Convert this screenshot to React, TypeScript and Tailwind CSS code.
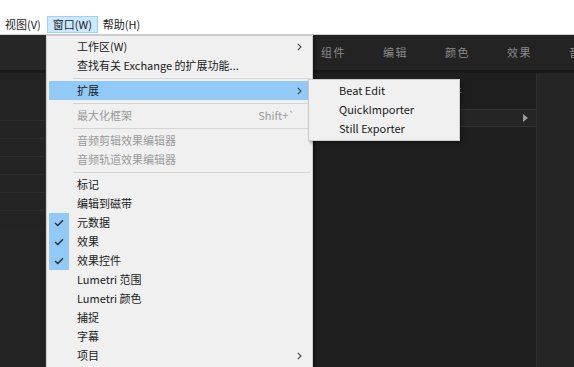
import React from "react";

const Check = () => (
  <svg width="10" height="8" viewBox="0 0 10 8" className="block">
    <polyline points="1,4 3.8,6.6 9,1.2" fill="none" stroke="#2b2b2b" strokeWidth="1.4" />
  </svg>
);

const Chevron = () => (
  <svg width="5" height="8" viewBox="0 0 5 8" className="block">
    <polyline points="0.8,0.8 4,4 0.8,7.2" fill="none" stroke="#444" strokeWidth="1.1" />
  </svg>
);

type Item =
  | { sep: true }
  | {
      sep?: false;
      label: string;
      sub?: boolean;
      disabled?: boolean;
      checked?: boolean;
      shortcut?: string;
      active?: boolean;
    };

const items: Item[] = [
  { label: "工作区(W)", sub: true },
  { label: "查找有关 Exchange 的扩展功能..." },
  { sep: true },
  { label: "扩展", sub: true, active: true },
  { sep: true },
  { label: "最大化框架", disabled: true, shortcut: "Shift+`" },
  { sep: true },
  { label: "音频剪辑效果编辑器", disabled: true },
  { label: "音频轨道效果编辑器", disabled: true },
  { sep: true },
  { label: "标记" },
  { label: "编辑到磁带" },
  { label: "元数据", checked: true },
  { label: "效果", checked: true },
  { label: "效果控件", checked: true },
  { label: "Lumetri 范围" },
  { label: "Lumetri 颜色" },
  { label: "捕捉" },
  { label: "字幕" },
  { label: "项目", sub: true },
];

export default function App() {
  return (
    <div className="relative w-[574px] h-[367px] overflow-hidden bg-white text-[11px] leading-none font-['Noto_Sans_CJK_SC','Noto_Sans',sans-serif]">
      {/* menu bar */}
      <div className="h-[35px] flex items-end pb-[1px] bg-white border-b border-[#cfcfcf] text-[#1a1a1a]">
        <div className="h-[17px] flex items-center pl-[5px] pr-[6px]">视图(V)</div>
        <div className="h-[17px] flex items-center px-[5px] bg-[#cce8ff] border border-[#99d1ff]">窗口(W)</div>
        <div className="h-[17px] flex items-center px-[5px]">帮助(H)</div>
      </div>

      {/* dark workspace */}
      <div className="flex h-[332px]">
        <div className="w-[46px] shrink-0 flex flex-col bg-[#232323] border-r border-[#363636]">
          <div className="h-[35px] bg-[#262626]" />
          <div className="h-[3px] bg-[#191919]" />
          <div className="h-[47px]" />
          <div className="h-[18px] border-t border-[#2c2c2c]" />
          <div className="h-[18px] border-t border-[#2c2c2c]" />
          <div className="h-[18px] border-t border-[#2c2c2c]" />
          <div className="h-[18px] border-t border-[#2c2c2c]" />
          <div className="h-[18px] border-t border-[#2c2c2c]" />
          <div className="h-[18px] border-t border-[#2c2c2c]" />
          <div className="flex-1 bg-[#242424]" />
        </div>
        <div className="flex-1 min-w-0 flex flex-col bg-[#1e1e1e]">
          <div className="h-[35px] bg-[#232323] flex items-center pl-[275px] overflow-hidden text-[#8a8a8a] tracking-[1.5px] whitespace-nowrap">
            <div className="w-[62px] shrink-0">组件</div>
            <div className="w-[62px] shrink-0">编辑</div>
            <div className="w-[62px] shrink-0">颜色</div>
            <div className="w-[62px] shrink-0">效果</div>
            <div className="w-[62px] shrink-0">音频</div>
          </div>
          <div className="h-[3px] bg-[#191919]" />
          <div className="flex-1 flex">
            <div className="flex-1 flex flex-col">
              <div className="h-[36px] flex items-center justify-end pr-[74px] text-[#8a8a8a]">效果控件</div>
              <div className="h-[18px] ml-[254px] flex items-center justify-end pr-[8px] bg-[#252525] border-y border-[#333]">
                <svg width="5" height="8" viewBox="0 0 5 8">
                  <polygon points="0,0 5,4 0,8" fill="#9a9a9a" />
                </svg>
              </div>
              <div className="flex-1 ml-[254px] bg-[#1f1f1f]" />
            </div>
            <div className="w-[38px] bg-[#252525] border-l border-[#2e2e2e]" />
          </div>
        </div>
      </div>

      {/* main dropdown */}
      <div className="absolute left-[46px] top-[35px] w-[267px] h-[340px] bg-[#f0f0f0] border border-[#cccccc] shadow-[2px_2px_3px_rgba(0,0,0,0.35)] pt-[1px] px-[2px] text-[#1a1a1a]">
        {items.map((it, i) =>
          it.sep ? (
            <div key={i} className="h-[6px] flex items-center pl-[24px]">
              <div className="h-px w-full bg-[#d5d5d5]" />
            </div>
          ) : (
            <div
              key={i}
              className={
                "h-[19px] flex items-center whitespace-nowrap " +
                (it.active ? "bg-[#91c9f7] " : "") +
                (it.disabled ? "text-[#9a9a9a]" : "text-[#1a1a1a]")
              }
            >
              <div className={"w-[20px] h-full flex items-center justify-center " + (it.checked ? "bg-[#91c9f7]" : "")}>
                {it.checked ? <Check /> : null}
              </div>
              <div className="pl-[8px] flex-1">{it.label}</div>
              {it.shortcut ? <div className="pr-[15px] text-[#9a9a9a]">{it.shortcut}</div> : null}
              {it.sub ? (
                <div className="pr-[8px]">
                  <Chevron />
                </div>
              ) : null}
            </div>
          )
        )}
      </div>

      {/* submenu */}
      <div className="absolute left-[308px] top-[79px] w-[152px] h-[62px] bg-[#f0f0f0] border border-[#cccccc] shadow-[2px_2px_3px_rgba(0,0,0,0.35)] pt-[1px] px-[2px] text-[#1a1a1a] whitespace-nowrap">
        <div className="h-[19px] flex items-center pl-[28px]">Beat Edit</div>
        <div className="h-[19px] flex items-center pl-[28px]">QuickImporter</div>
        <div className="h-[19px] flex items-center pl-[28px]">Still Exporter</div>
      </div>
    </div>
  );
}
